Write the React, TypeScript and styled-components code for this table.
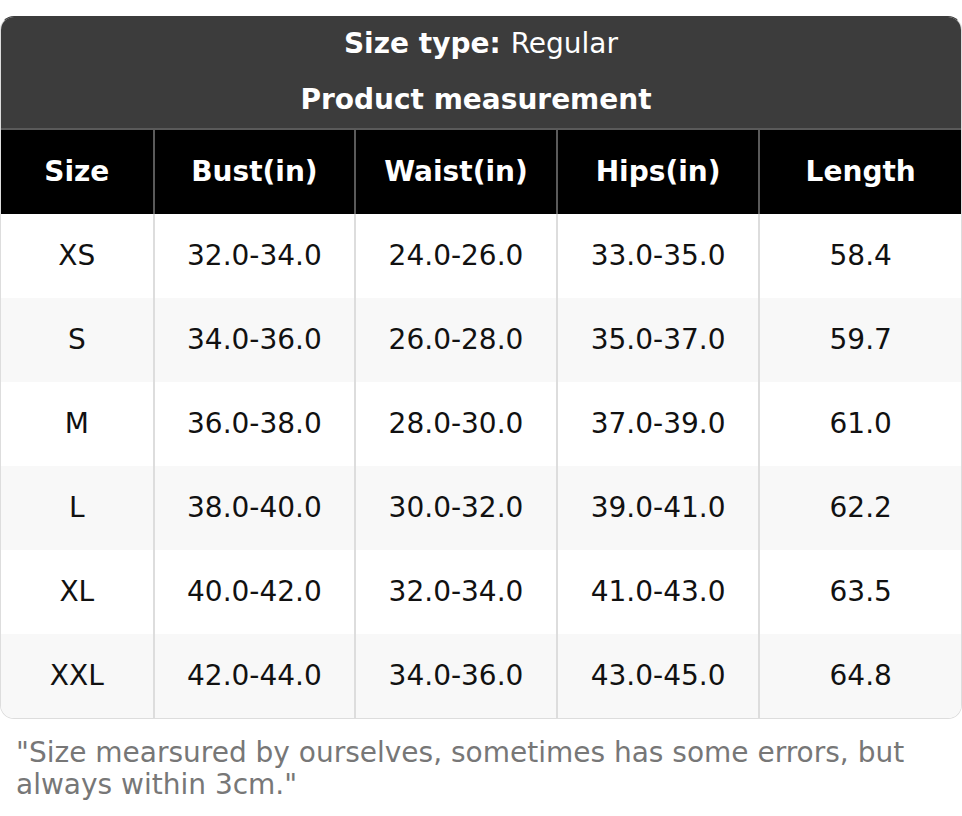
import React from "react";
import styled, { createGlobalStyle } from "styled-components";

const Global = createGlobalStyle`
  html, body { margin: 0; padding: 0; background: #fff; }
  body { font-family: "DejaVu Sans", sans-serif; }
`;

const Page = styled.div`
  padding-top: 16px;
`;

const Card = styled.div`
  border: 1px solid #dddddd;
  border-top-color: #3c3c3c;
  border-radius: 14px;
  overflow: hidden;
`;

const Banner = styled.div`
  background: #3c3c3c;
  color: #fff;
  display: flex;
  flex-direction: column;
`;

const BannerLine = styled.div<{ $h: number }>`
  height: ${(p) => p.$h}px;
  box-sizing: border-box;
  padding-bottom: 2px;
  display: flex;
  align-items: center;
  justify-content: center;
  font-size: 28px;
  b { font-weight: bold; margin-right: 10px; }
`;

const Table = styled.table`
  width: 100%;
  border-collapse: collapse;
  table-layout: fixed;
  font-size: 28px;
`;

const HeadCell = styled.th`
  background: #000;
  color: #fff;
  font-weight: bold;
  height: 82px;
  padding: 0 0 2px;
  border-top: 2px solid #5a5a5a;
  border-left: 2px solid #5a5a5a;
  &:first-child { border-left: none; }
`;

const Row = styled.tr<{ $alt: boolean }>`
  background: ${(p) => (p.$alt ? "#f8f8f8" : "#ffffff")};
`;

const Cell = styled.td`
  height: 82px;
  padding: 0 0 2px;
  text-align: center;
  color: #111;
  border-left: 2px solid #dddddd;
  &:first-child { border-left: none; }
`;

const Note = styled.p`
  margin: 18px 0 0;
  padding: 0 16px;
  color: #777;
  font-size: 28px;
  line-height: 32px;
`;

const cols = ["Size", "Bust(in)", "Waist(in)", "Hips(in)", "Length"];
const widths = ["15.9%", "21%", "21%", "21.1%", "21%"];
const rows = [
  ["XS", "32.0-34.0", "24.0-26.0", "33.0-35.0", "58.4"],
  ["S", "34.0-36.0", "26.0-28.0", "35.0-37.0", "59.7"],
  ["M", "36.0-38.0", "28.0-30.0", "37.0-39.0", "61.0"],
  ["L", "38.0-40.0", "30.0-32.0", "39.0-41.0", "62.2"],
  ["XL", "40.0-42.0", "32.0-34.0", "41.0-43.0", "63.5"],
  ["XXL", "42.0-44.0", "34.0-36.0", "43.0-45.0", "64.8"],
];

export default function App() {
  return (
    <Page>
      <Global />
      <Card>
        <Banner>
          <BannerLine $h={55}>
            <b>Size type:</b>Regular
          </BannerLine>
          <BannerLine $h={56}>
            <b>Product measurement</b>
          </BannerLine>
        </Banner>
        <Table>
          <colgroup>
            {widths.map((w, i) => (
              <col key={i} style={{ width: w }} />
            ))}
          </colgroup>
          <thead>
            <tr>
              {cols.map((c) => (
                <HeadCell key={c}>{c}</HeadCell>
              ))}
            </tr>
          </thead>
          <tbody>
            {rows.map((r, i) => (
              <Row key={r[0]} $alt={i % 2 === 1}>
                {r.map((v, j) => (
                  <Cell key={j}>{v}</Cell>
                ))}
              </Row>
            ))}
          </tbody>
        </Table>
      </Card>
      <Note>
        "Size mearsured by ourselves, sometimes has some errors, but always within 3cm."
      </Note>
    </Page>
  );
}
